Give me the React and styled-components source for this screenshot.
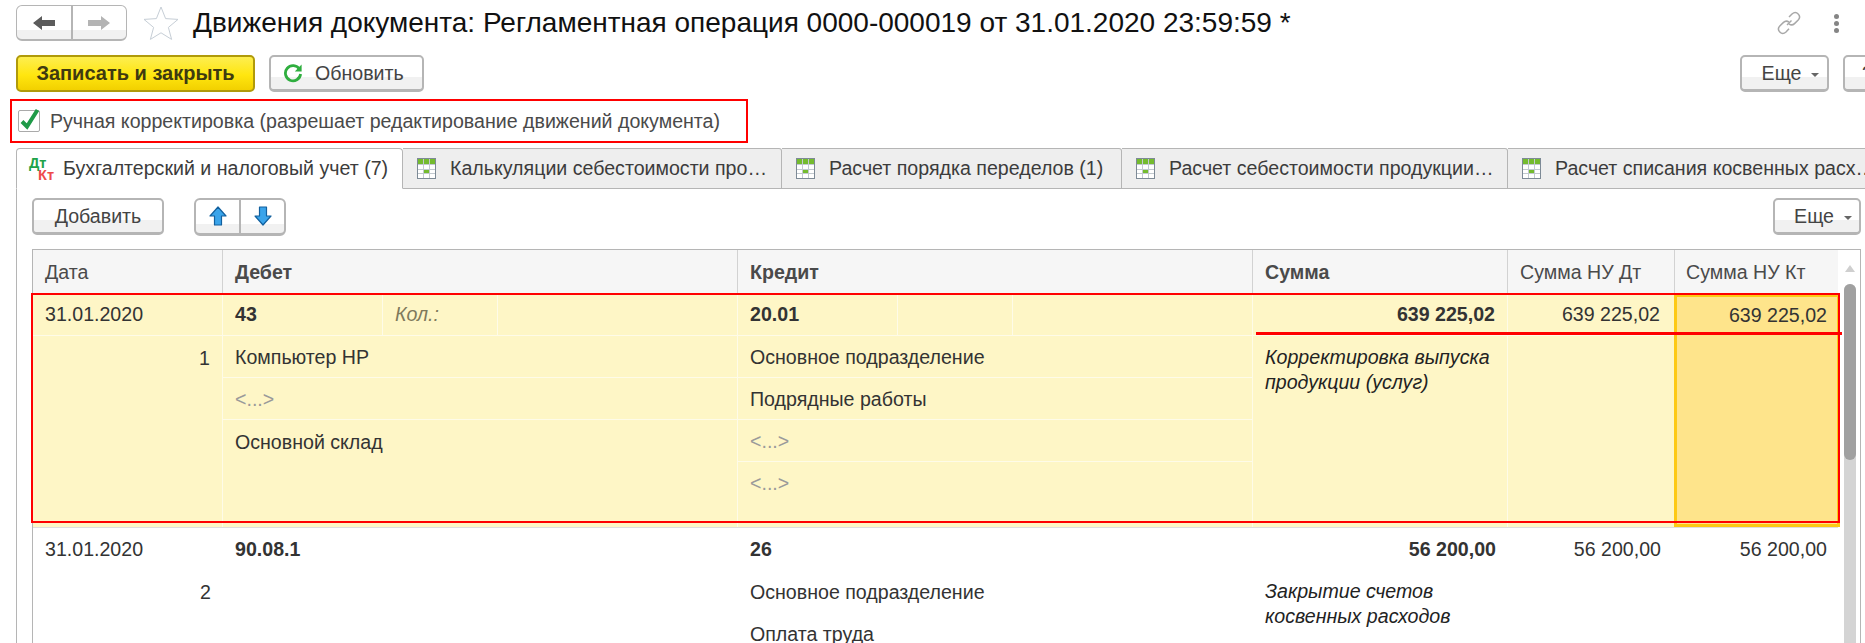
import React from "react";
import styled, { createGlobalStyle } from "styled-components";

const GlobalStyle = createGlobalStyle`
html, body {
  margin: 0;
  padding: 0;
  background: #fff;
}
body {
  font-family: "Liberation Sans", Arial, sans-serif;
  font-size: 19.6px;
  color: #333;
}
`;

const COLS = "190px 515px 515px 255px 167px 163px";
const ROW_BG = "#fef6c6";
const ROW_LINE = "#fefbe8";
const GREY = "#b5b5b5";

const Page = styled.div`
  width: 1865px;
  height: 643px;
  overflow: hidden;
  display: flex;
  flex-direction: column;
`;

const TitleBar = styled.div`
  display: flex;
  align-items: center;
  height: 36px;
  margin-top: 5px;
  padding: 0 26px 0 16px;
`;

const StarIcon = styled.svg`
  width: 36px;
  height: 36px;
  margin: 0 14px 0 16px;
`;

const Title = styled.div`
  font-size: 28px;
  color: #111;
  white-space: nowrap;
`;

const TitleTools = styled.div`
  margin-left: auto;
  display: flex;
  align-items: center;
  gap: 33px;
`;

const Dots = styled.div`
  display: flex;
  flex-direction: column;
  gap: 2px;
  span {
    width: 5px;
    height: 5px;
    border-radius: 50%;
    background: #858585;
  }
`;

const CommandBar = styled.div`
  display: flex;
  align-items: center;
  gap: 14px;
  height: 37px;
  margin-top: 14px;
  padding-left: 16px;
`;

const Spacer = styled.div`
  flex: 1;
`;

const Button = styled.div`
  box-sizing: border-box;
  flex-shrink: 0;
  width: ${({ $w }) => $w}px;
  height: 37px;
  display: flex;
  align-items: center;
  justify-content: ${({ $start }) => ($start ? "flex-start" : "center")};
  gap: ${({ $gap }) => $gap || 0}px;
  padding-left: ${({ $pl }) => $pl || 0}px;
  margin-right: ${({ $mr }) => $mr || 0}px;
  border: 2px solid ${GREY};
  border-bottom-width: 3px;
  border-radius: 5px;
  background: linear-gradient(#fff 0, #fff 64%, #f1f1f1 64%, #f1f1f1 100%);
  color: #444;
  white-space: nowrap;
`;

const PrimaryButton = styled(Button)`
  border: 2px solid #b09a0a;
  border-bottom-width: 2px;
  background: linear-gradient(#fdee50 0, #ffe60f 55%, #f2d000 100%);
  color: #3f3a10;
  font-size: 20px;
  font-weight: bold;
`;

const MoreCaret = styled.span`
  width: 0;
  height: 0;
  margin-top: 3px;
  border-left: 4px solid transparent;
  border-right: 4px solid transparent;
  border-top: 4px solid #666;
`;

const Segments = styled.div`
  box-sizing: border-box;
  display: flex;
  width: ${({ $w }) => $w}px;
  height: ${({ $h }) => $h}px;
  border: ${({ $thin }) => ($thin ? "1.5px" : "2px")} solid ${GREY};
  border-bottom-width: ${({ $thin }) => ($thin ? "2px" : "3px")};
  border-radius: 6px;
  overflow: hidden;
  background: linear-gradient(#fff 0, #fff 72%, #f1f1f1 72%, #f1f1f1 100%);
`;

const Segment = styled.div`
  flex: 1;
  display: flex;
  align-items: center;
  justify-content: center;
  & + & {
    border-left: ${({ $thin }) => ($thin ? "1px solid #c8c8c8" : `2px solid ${GREY}`)};
  }
`;

const ManualBox = styled.label`
  box-sizing: border-box;
  display: flex;
  align-items: center;
  gap: 10px;
  width: 738px;
  height: 44px;
  margin: 7px 0 5px 10px;
  padding-left: 6px;
  border: 2px solid #f00;
  color: #4a4a4a;
  white-space: nowrap;
`;

const CheckBox = styled.span`
  box-sizing: border-box;
  flex-shrink: 0;
  width: 22px;
  height: 22px;
  border: 1px solid #aaa;
  border-radius: 2px;
  background: #fff;
  svg {
    display: block;
    overflow: visible;
  }
`;

const TabBar = styled.div`
  display: flex;
  height: 41px;
  padding-left: 16px;
`;

const Tab = styled.div`
  box-sizing: border-box;
  flex-shrink: 0;
  width: ${({ $w }) => $w}px;
  display: flex;
  align-items: center;
  gap: ${({ $active }) => ($active ? 9 : 14)}px;
  padding-left: ${({ $active }) => ($active ? 12 : 14)}px;
  border-top: 1px solid ${GREY};
  border-right: 1px solid ${GREY};
  border-bottom: ${({ $active }) => ($active ? "1px solid #fff" : `1px solid ${GREY}`)};
  border-left: ${({ $active }) => ($active ? `1px solid ${GREY}` : "none")};
  border-radius: ${({ $active }) => ($active ? "4px 4px 0 0" : "0 3px 0 0")};
  background: ${({ $active }) => ($active ? "#fff" : "#eeeeee")};
  color: #3c3c3c;
  white-space: nowrap;
`;

const DebitCreditMark = styled.span`
  display: flex;
  flex-direction: column;
  width: 25px;
  font-size: 14.5px;
  font-weight: bold;
  line-height: 12px;
`;

const DebitMark = styled.span`
  color: #1ea34a;
`;

const CreditMark = styled.span`
  color: #ee4b4b;
  align-self: flex-end;
`;

const Panel = styled.div`
  flex: 1;
  min-height: 0;
  display: flex;
  flex-direction: column;
  margin-left: 16px;
  padding: 9px 4px 0 15px;
  border-left: 1px solid ${GREY};
`;

const PanelToolbar = styled.div`
  display: flex;
  align-items: center;
  height: 37px;
  margin-bottom: 14px;
  gap: 30px;
`;

const TableFrame = styled.div`
  flex: 1;
  min-height: 0;
  display: flex;
  border-top: 1px solid ${GREY};
  border-left: 1px solid ${GREY};
  border-right: 1px solid ${GREY};
`;

const TableBody = styled.div`
  width: 1805px;
  flex-shrink: 0;
`;

const HeaderRow = styled.div`
  display: grid;
  grid-template-columns: ${COLS};
  height: 44px;
  background: #f6f6f6;
`;

const HeaderCell = styled.div`
  display: flex;
  align-items: center;
  padding-left: ${({ $pl }) => $pl || 12}px;
  border-right: ${({ $last }) => ($last ? "none" : "1px solid #d2d2d2")};
  font-weight: ${({ $bold }) => ($bold ? "bold" : "normal")};
  color: #4a4a4a;
`;

const Row = styled.div`
  position: relative;
  display: grid;
  grid-template-columns: ${COLS};
  height: 234px;
  background: ${({ $selected }) => ($selected ? ROW_BG : "#fff")};
  border-bottom: ${({ $selected }) => ($selected ? "1px solid #dedede" : "none")};
  box-sizing: border-box;
`;

const Cell = styled.div`
  min-width: 0;
  border-right: ${({ $sep }) => ($sep ? `1px solid ${ROW_LINE}` : "none")};
`;

const ActiveCell = styled.div`
  box-sizing: border-box;
  margin: 0 -2px 0 -1px;
  border: 3px solid #fdc914;
  background: #fee48b;
`;

const Line = styled.div`
  box-sizing: border-box;
  display: flex;
  align-items: center;
  height: ${({ $h }) => $h || 42}px;
  padding: 0 ${({ $pr }) => $pr || 13}px 0 ${({ $pl }) => $pl || 12}px;
  justify-content: ${({ $right }) => ($right ? "flex-end" : "flex-start")};
  border-bottom: ${({ $sep }) => ($sep ? `1px solid ${ROW_LINE}` : "none")};
  font-weight: ${({ $bold }) => ($bold ? "bold" : "normal")};
  color: ${({ $muted }) => ($muted ? "#9a9a9a" : "#333")};
  white-space: nowrap;
`;

const SplitLine = styled.div`
  display: grid;
  grid-template-columns: 160px 115px 1fr;
  height: 42px;
  box-sizing: border-box;
  border-bottom: 1px solid ${ROW_LINE};
`;

const SubCell = styled.div`
  display: flex;
  align-items: center;
  padding-left: 12px;
  border-right: ${({ $last }) => ($last ? "none" : `1px solid ${ROW_LINE}`)};
  font-weight: ${({ $bold }) => ($bold ? "bold" : "normal")};
  font-style: ${({ $hint }) => ($hint ? "italic" : "normal")};
  color: ${({ $hint }) => ($hint ? "#7f7a5c" : "#333")};
`;

const LowerLine = styled(Line)`
  padding-top: 2px;
`;

const Note = styled.div`
  padding: 9px 10px 0 12px;
  font-style: italic;
  line-height: 25px;
  color: #222;
`;

const RowFrame = styled.div`
  position: absolute;
  top: -1px;
  left: -2px;
  right: -2px;
  bottom: 4px;
  border: 2px solid #f00;
  pointer-events: none;
`;

const StrikeLine = styled.div`
  position: absolute;
  top: 38px;
  left: 1223px;
  width: 586px;
  height: 3px;
  background: #f00;
  pointer-events: none;
`;

const ScrollBar = styled.div`
  flex: 1;
  display: flex;
  flex-direction: column;
  align-items: flex-start;
  padding: 15px 0 0 6px;
`;

const ScrollUp = styled.div`
  width: 0;
  height: 0;
  margin: 0 0 12px 1px;
  border-left: 5px solid transparent;
  border-right: 5px solid transparent;
  border-bottom: 7px solid #cfcfcf;
`;

const ScrollTrack = styled.div`
  flex: 1;
  width: 12px;
  border-radius: 6px 6px 0 0;
  background: #d4d4d4;
`;

const ScrollThumb = styled.div`
  height: 176px;
  border-radius: 6px;
  background: #a0a0a0;
`;

const ArrowLeft = ({ fill }) => (
  <svg width="24" height="16" viewBox="0 0 24 16">
    <path d="M1 8 L10 1 V5 H23 V11 H10 V15 Z" fill={fill} />
  </svg>
);

const ArrowRight = ({ fill }) => (
  <svg width="24" height="16" viewBox="0 0 24 16">
    <path d="M23 8 L14 1 V5 H1 V11 H14 V15 Z" fill={fill} />
  </svg>
);

const BlueUp = () => (
  <svg width="18" height="20" viewBox="0 0 18 20">
    <path d="M9 1 L17 10 H12.5 V19 H5.5 V10 H1 Z" fill="#3aa4ea" stroke="#12609e" strokeWidth="1.2" strokeLinejoin="round" />
  </svg>
);

const BlueDown = () => (
  <svg width="18" height="20" viewBox="0 0 18 20">
    <path d="M9 19 L17 10 H12.5 V1 H5.5 V10 H1 Z" fill="#3aa4ea" stroke="#12609e" strokeWidth="1.2" strokeLinejoin="round" />
  </svg>
);

const RefreshIcon = () => (
  <svg width="20" height="20" viewBox="0 0 20 20" fill="none">
    <path d="M16.5 6.2 A7.6 7.6 0 1 0 17.6 11" stroke="#2fae3f" strokeWidth="2.8" />
    <path d="M18.6 1.6 V8.4 H11.8 Z" fill="#2fae3f" />
  </svg>
);

const LinkIcon = () => (
  <svg width="24" height="24" viewBox="0 0 24 24" fill="none" stroke="#a8a8a8" strokeWidth="1.5">
    <path d="M10 14 L14.5 9.5" />
    <path d="M12 6 L15 3 C17 1.2 19.5 1.2 21.2 3 C23 4.8 23 7 21.2 9 L17.5 12.6 C15.8 14.2 13.5 14 12 12.8" />
    <path d="M12 17.8 L9 21 C7 22.8 4.5 22.8 2.8 21 C1 19.2 1 17 2.8 15 L6.5 11.4 C8.2 9.8 10.5 10 12 11.2" />
  </svg>
);

const TableIcon = () => (
  <svg width="19" height="21" viewBox="0 0 19 21" shapeRendering="crispEdges">
    <rect x="0.5" y="0.5" width="18" height="20" fill="#fff" stroke="#7d8a96" />
    <rect x="1" y="1" width="17" height="5" fill="#74bb2e" />
    <rect x="7" y="11" width="5" height="5" fill="#74bb2e" />
    <path d="M6.5 1 V20 M12.5 1 V20 M1 6.5 H18 M1 11 H18 M1 15.5 H18" stroke="#c2c9cf" fill="none" />
  </svg>
);

const Star = () => (
  <StarIcon viewBox="0 0 36 36">
    <path d="M18 2 L22.6 13.6 L35 14.4 L25.4 22.4 L28.6 34.4 L18 27.8 L7.4 34.4 L10.6 22.4 L1 14.4 L13.4 13.6 Z" fill="#fff" stroke="#c6ced6" strokeWidth="1" />
  </StarIcon>
);

const tabs = [
  { w: 379, label: "Калькуляции себестоимости про…" },
  { w: 340, label: "Расчет порядка переделов (1)" },
  { w: 386, label: "Расчет себестоимости продукции…" },
  { w: 400, label: "Расчет списания косвенных расх…" },
];

const App = () => {
  return (
    <Page>
      <GlobalStyle />
      <TitleBar>
        <Segments $w={111} $h={36} $thin>
          <Segment $thin>
            <ArrowLeft fill="#5c5c5c" />
          </Segment>
          <Segment $thin>
            <ArrowRight fill="#b4b4b4" />
          </Segment>
        </Segments>
        <Star />
        <Title>Движения документа: Регламентная операция 0000-000019 от 31.01.2020 23:59:59 *</Title>
        <TitleTools>
          <LinkIcon />
          <Dots>
            <span />
            <span />
            <span />
          </Dots>
        </TitleTools>
      </TitleBar>

      <CommandBar>
        <PrimaryButton $w={239}>Записать и закрыть</PrimaryButton>
        <Button $w={155} $start $gap={12} $pl={12}>
          <RefreshIcon />
          Обновить
        </Button>
        <Spacer />
        <Button $w={89} $gap={10} $pl={12}>
          Еще
          <MoreCaret />
        </Button>
        <Button $w={58} $start $pl={17} $mr={-36}>
          ?
        </Button>
      </CommandBar>

      <ManualBox>
        <CheckBox>
          <svg width="20" height="20" viewBox="0 0 20 20">
            <path d="M3 10.5 L8 15.5 L18.5 -1" fill="none" stroke="#1f9a48" strokeWidth="4" />
          </svg>
        </CheckBox>
        Ручная корректировка (разрешает редактирование движений документа)
      </ManualBox>

      <TabBar>
        <Tab $active $w={387}>
          <DebitCreditMark>
            <DebitMark>Дт</DebitMark>
            <CreditMark>Кт</CreditMark>
          </DebitCreditMark>
          Бухгалтерский и налоговый учет (7)
        </Tab>
        {tabs.map((tab) => (
          <Tab key={tab.label} $w={tab.w}>
            <TableIcon />
            {tab.label}
          </Tab>
        ))}
      </TabBar>

      <Panel>
        <PanelToolbar>
          <Button $w={132}>Добавить</Button>
          <Segments $w={92} $h={38}>
            <Segment>
              <BlueUp />
            </Segment>
            <Segment>
              <BlueDown />
            </Segment>
          </Segments>
          <Spacer />
          <Button $w={88} $gap={10} $pl={12}>
            Еще
            <MoreCaret />
          </Button>
        </PanelToolbar>

        <TableFrame>
          <TableBody>
            <HeaderRow>
              <HeaderCell>Дата</HeaderCell>
              <HeaderCell $bold>Дебет</HeaderCell>
              <HeaderCell $bold>Кредит</HeaderCell>
              <HeaderCell $bold>Сумма</HeaderCell>
              <HeaderCell>Сумма НУ Дт</HeaderCell>
              <HeaderCell $last $pl={11}>Сумма НУ Кт</HeaderCell>
            </HeaderRow>

            <Row $selected>
              <Cell $sep>
                <Line $sep>31.01.2020</Line>
                <LowerLine $right $pr={12}>1</LowerLine>
              </Cell>
              <Cell $sep>
                <SplitLine>
                  <SubCell $bold>43</SubCell>
                  <SubCell $hint>Кол.:</SubCell>
                  <SubCell $last />
                </SplitLine>
                <LowerLine $sep>Компьютер HP</LowerLine>
                <LowerLine $sep $muted>&lt;...&gt;</LowerLine>
                <LowerLine>Основной склад</LowerLine>
              </Cell>
              <Cell $sep>
                <SplitLine>
                  <SubCell $bold>20.01</SubCell>
                  <SubCell />
                  <SubCell $last />
                </SplitLine>
                <LowerLine $sep>Основное подразделение</LowerLine>
                <LowerLine $sep>Подрядные работы</LowerLine>
                <LowerLine $sep $muted>&lt;...&gt;</LowerLine>
                <Line $muted>&lt;...&gt;</Line>
              </Cell>
              <Cell $sep>
                <Line $sep $right $bold $pr={12}>639 225,02</Line>
                <Note>Корректировка выпуска продукции (услуг)</Note>
              </Cell>
              <Cell $sep>
                <Line $sep $right $pr={14}>639 225,02</Line>
              </Cell>
              <ActiveCell>
                <Line $right $pr={10} $h={36}>639 225,02</Line>
              </ActiveCell>
              <RowFrame />
              <StrikeLine />
            </Row>

            <Row>
              <Cell>
                <Line>31.01.2020</Line>
                <LowerLine $right $pr={12}>2</LowerLine>
              </Cell>
              <Cell>
                <Line $bold>90.08.1</Line>
              </Cell>
              <Cell>
                <Line $bold>26</Line>
                <LowerLine>Основное подразделение</LowerLine>
                <LowerLine>Оплата труда</LowerLine>
              </Cell>
              <Cell>
                <Line $right $bold $pr={12}>56 200,00</Line>
                <Note>Закрытие счетов косвенных расходов</Note>
              </Cell>
              <Cell>
                <Line $right $pr={14}>56 200,00</Line>
              </Cell>
              <Cell>
                <Line $right $pr={11}>56 200,00</Line>
              </Cell>
            </Row>
          </TableBody>

          <ScrollBar>
            <ScrollUp />
            <ScrollTrack>
              <ScrollThumb />
            </ScrollTrack>
          </ScrollBar>
        </TableFrame>
      </Panel>
    </Page>
  );
};

export default App;
